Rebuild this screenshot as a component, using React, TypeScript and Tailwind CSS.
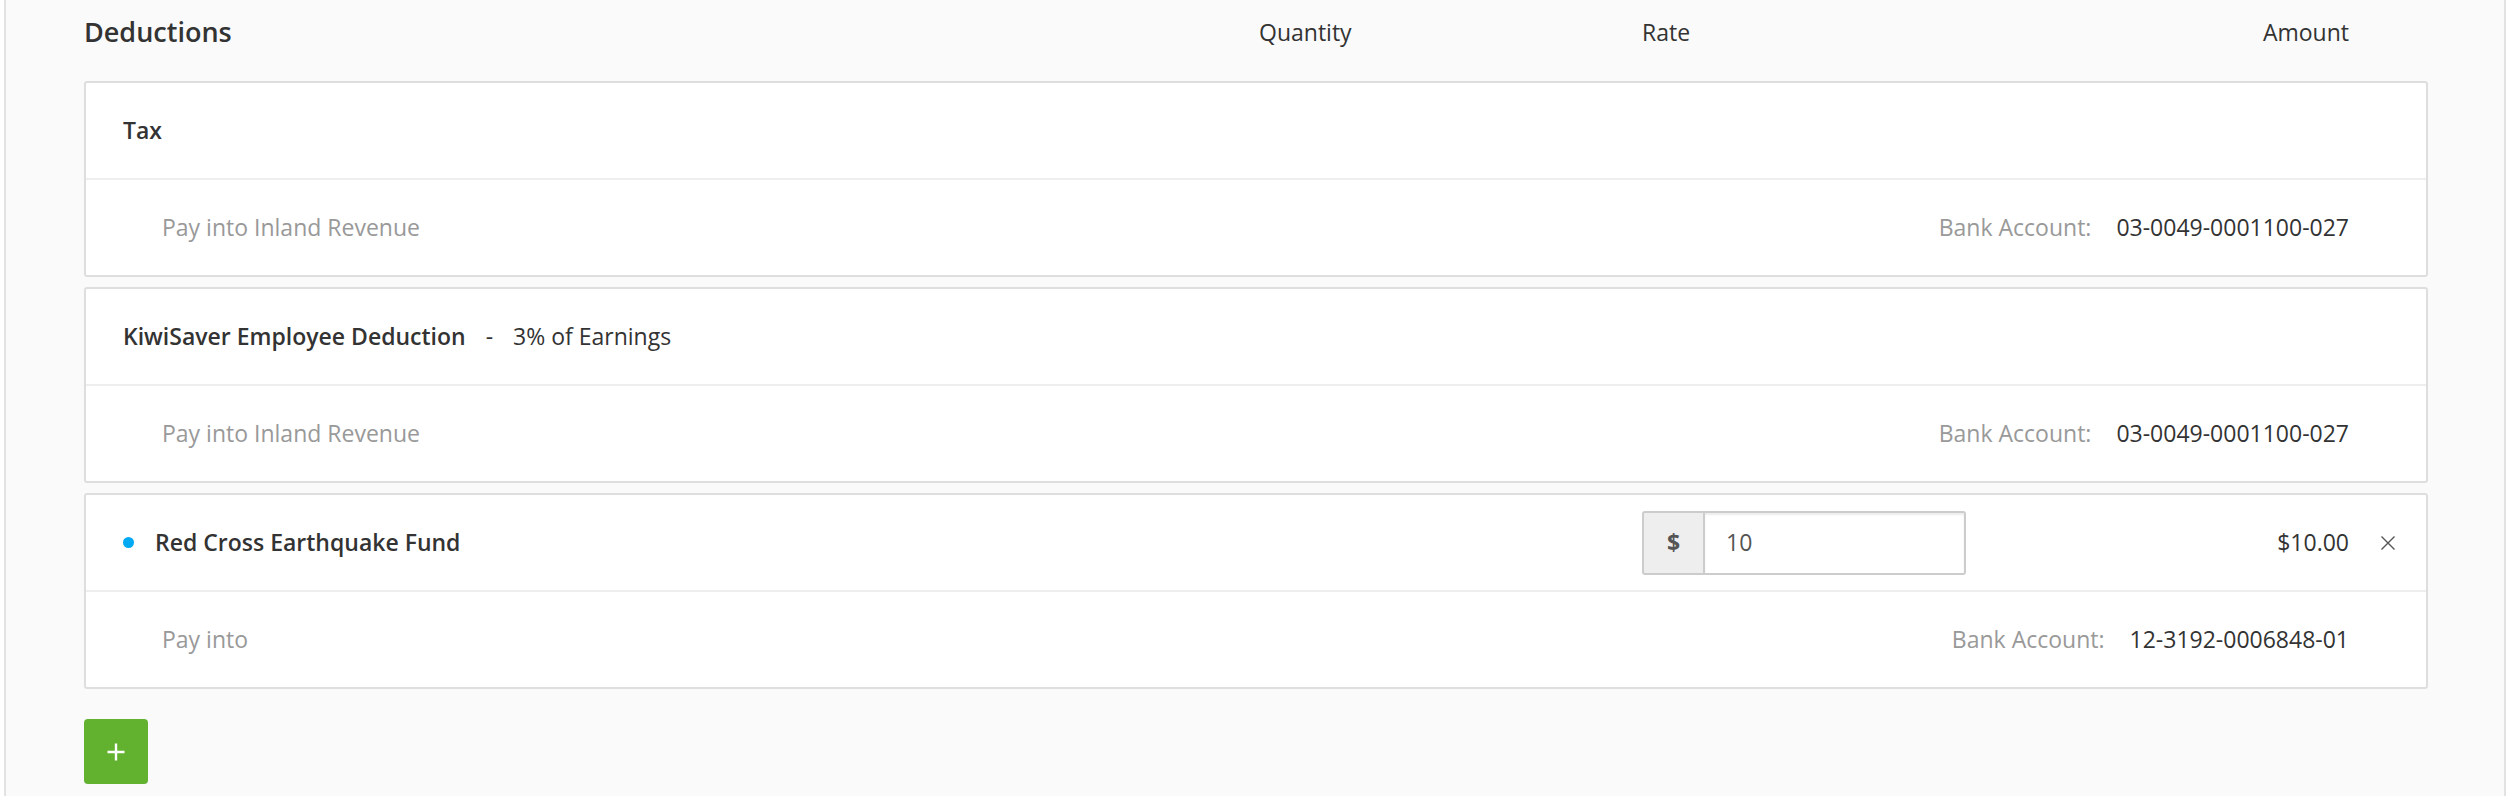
import React from 'react';

type Deduction = {
  name: string;
  note?: string;
  payInto: string;
  account: string;
  editable?: boolean;
  rate?: string;
  amount?: string;
};

const deductions: Deduction[] = [
  { name: 'Tax', payInto: 'Pay into Inland Revenue', account: '03-0049-0001100-027' },
  {
    name: 'KiwiSaver Employee Deduction',
    note: '3% of Earnings',
    payInto: 'Pay into Inland Revenue',
    account: '03-0049-0001100-027',
  },
  {
    name: 'Red Cross Earthquake Fund',
    payInto: 'Pay into',
    account: '12-3192-0006848-01',
    editable: true,
    rate: '10',
    amount: '$10.00',
  },
];

function CloseIcon() {
  return (
    <svg width="16" height="16" viewBox="0 0 16 16" className="text-[#555]">
      <path d="M1.5 1.5 L14.5 14.5 M14.5 1.5 L1.5 14.5" stroke="currentColor" strokeWidth="1.4" fill="none" />
    </svg>
  );
}

function DeductionCard({ item }: { item: Deduction }) {
  return (
    <div className="bg-white border-2 border-[#dedede] rounded-[3px]">
      {/* main row */}
      <div className="grid grid-cols-[1fr_383px_384px_323px_77px] items-center h-[97px] border-b-2 border-[#eeeeee]">
        <div className="pl-[37px] flex items-center text-[#333]">
          {item.editable && <span className="w-[11px] h-[11px] rounded-full bg-[#00a9f1] mr-[21px]" />}
          <span className="font-semibold">{item.name}</span>
          {item.note && (
            <>
              <span className="mx-[20px]">-</span>
              <span>{item.note}</span>
            </>
          )}
        </div>
        <div />
        <div>
          {item.editable && (
            <div className="flex h-[64px] w-[324px]">
              <div className="w-[63px] flex items-center justify-center bg-[#eeeeee] border-2 border-[#cccccc] rounded-l-[3px] font-bold text-[#555]">
                $
              </div>
              <div className="flex-1 flex items-center pl-[21px] border-2 border-l-0 border-[#cccccc] rounded-r-[3px] bg-white shadow-[inset_0_2px_2px_rgba(0,0,0,0.075)] text-[#555]">
                {item.rate}
              </div>
            </div>
          )}
        </div>
        <div className="text-right text-[#333]">{item.amount}</div>
        <div className="flex justify-center">{item.editable && <CloseIcon />}</div>
      </div>
      {/* pay into row */}
      <div className="flex items-center justify-between h-[95px] pl-[76px] pr-[77px]">
        <span className="text-[#999]">{item.payInto}</span>
        <div className="flex items-center">
          <span className="text-[#999]">Bank Account:</span>
          <span className="ml-[25px] text-[#333]">{item.account}</span>
        </div>
      </div>
    </div>
  );
}

export default function App() {
  return (
    <div className="min-h-screen bg-white px-[4px] font-['Open_Sans',sans-serif] text-[23px] leading-[1.4]">
      <div className="min-h-[796px] bg-[#fafafa] border-x-2 border-[#e2e2e2] pl-[78px] pr-[76px]">
        {/* header */}
        <div className="grid grid-cols-[1fr_383px_384px_323px_79px] items-center h-[64px] mb-[17px] text-[#333]">
          <h2 className="text-[27px] font-semibold">Deductions</h2>
          <div>Quantity</div>
          <div>Rate</div>
          <div className="text-right">Amount</div>
          <div />
        </div>

        <div className="flex flex-col gap-[10px]">
          {deductions.map((d) => (
            <DeductionCard key={d.name} item={d} />
          ))}
        </div>

        <button className="mt-[30px] w-[64px] h-[65px] rounded-[4px] bg-[#62b22f] flex items-center justify-center">
          <svg width="18" height="18" viewBox="0 0 18 18">
            <path d="M9 0.5 V17.5 M0.5 9 H17.5" stroke="white" strokeWidth="2.4" fill="none" />
          </svg>
        </button>
      </div>
    </div>
  );
}
